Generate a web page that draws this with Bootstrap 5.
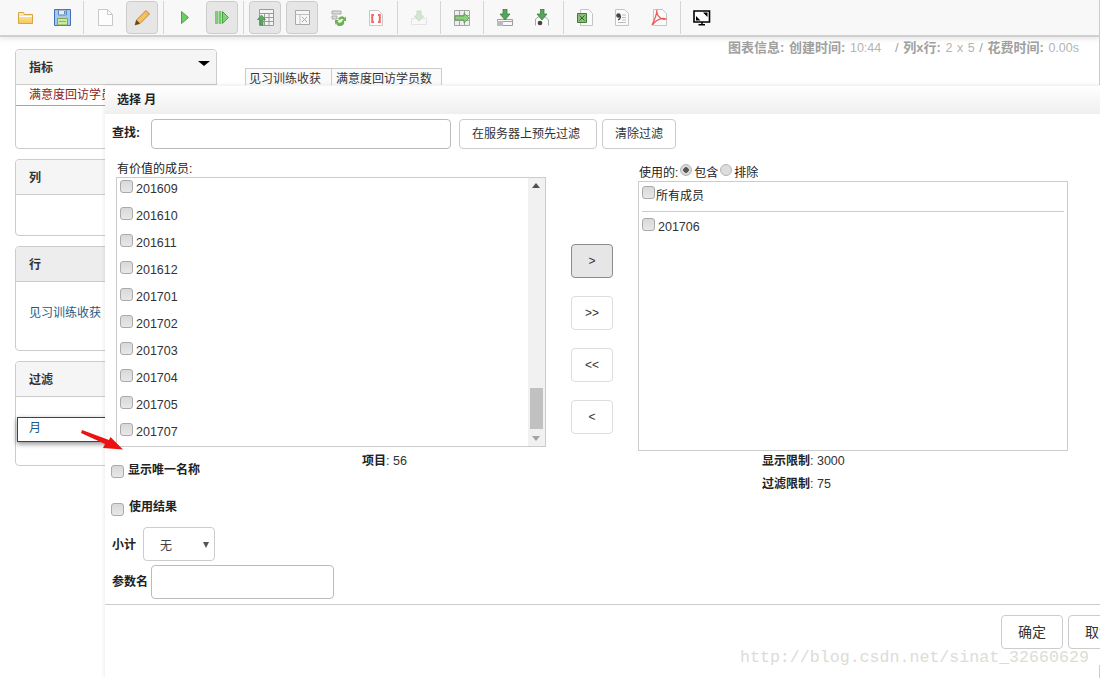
<!DOCTYPE html>
<html lang="zh">
<head>
<meta charset="utf-8">
<link rel="stylesheet" href="https://cdn.jsdelivr.net/npm/bootstrap@5.3.0/dist/css/bootstrap.min.css">
<style>
html,body{height:678px;overflow:hidden}
body{font:12px/1.4 "Liberation Sans","Noto Sans CJK SC",sans-serif;color:#333;background:#fff;position:relative;width:1100px}
.tb{height:37px;background:#f8f8f8;border-bottom:2px solid #d0d0d0;padding-left:9px;gap:5px;box-shadow:0 2px 5px rgba(0,0,0,.1);border-right:1px solid #ccc}
.tbtn{width:32px;height:33px;margin-top:1px;border-radius:4px;border:1px solid transparent}
.tbtn.on{background:#e6e6e6;border-color:#ccc}
.tsep{width:1px;height:33px;margin-top:1px;background:#d5d5d5}
.stage{height:641px;border-right:1px solid #ccc}
.side{width:202px;margin-left:15px;padding-top:12px;gap:10px}
.pnl{border:1px solid #ccc;border-radius:4px;background:#fff}
.pnl-h{height:35px;background:#f5f5f5;border-bottom:1px solid #ccc;font-weight:700;padding-left:13px;line-height:36px;color:#333;position:relative;border-radius:3px 3px 0 0}
.pnl-h.hov{background:#ededed}
.caret-dn{position:absolute;right:6px;top:11px;border:5px solid transparent;border-top-color:#000;border-bottom:0;border-left-width:6px;border-right-width:6px}
.p1{height:100px}.p2{height:77px}.p3,.p4{height:105px}
.m-red{color:#8b1a1a;padding-left:13px;height:21px;line-height:21px;border-bottom:1px solid #e08a8a}
.m-blue{color:#1d5a85;padding-left:13px}
.p3 .m-blue{margin-top:23px}
.m-blue.redbox{margin:20px 0 0 1px;padding-left:11px;height:25px;border:1px solid #d00;line-height:20px;box-shadow:0 2px 5px rgba(0,0,0,.45)}
.main{flex:1;position:relative}
.info{text-align:right;color:#a0a0a0;padding:2px 20px 0 0;height:31px;line-height:17px;font-size:13px;word-spacing:1px}
.info span{color:#b4b4b4;font-size:12.5px}
.pvt{margin:0 0 0 28px;border-collapse:collapse;line-height:16px}
.pvt td{border:1px solid #ccc;border-bottom:0;padding:2px 3px 0 3px;background:#fafafa;height:17px;color:#333;white-space:nowrap}
.pvt td.w1{width:86px}.pvt td.w2{width:110px;padding-left:4px}
.dlg{position:absolute;left:105px;top:85px;width:1020px;height:593px;background:#fff;box-shadow:-1px 0 4px rgba(0,0,0,.08)}
.dlg-h{height:29px;background:linear-gradient(#fff,#efefef);font-weight:700;line-height:29px;padding-left:12px;color:#222;border-top:1px solid #f3f3f3;font-size:12px}
.lbl{font-weight:700;color:#222}
.lbl-s{line-height:28px}
.srch{padding:5px 0 0 7px;height:35px}
.fld{border:1px solid #bbb;border-radius:4px;background:#fff;outline:0;padding:0}
.f1{width:300px;height:30px;margin:0 8px 0 11px}
.gbtn{background:#fff;border:1px solid #ccc;border-radius:4px;color:#333;font-size:12px;padding:1px 0 0;height:30px}
.gb1{width:138px;padding-right:4px}
.gb2{width:74px;margin-left:5px}
.cols{height:310px}
.lcol{width:430px;margin-left:11px}
.cap{height:13px;line-height:13px;margin-top:14px;padding-left:1px;color:#222;white-space:nowrap}
.lst{height:270px;width:430px;border:1px solid #ccc;position:relative;overflow:hidden;margin-top:1px}
.itm{height:27px;padding:2px 0 0 3px;gap:3px;align-items:flex-start;white-space:nowrap;color:#333;font-size:12.5px;line-height:16px}
.itm span{margin-top:1px}
.ck{appearance:none;-webkit-appearance:none;width:13px;height:13px;border:1px solid #aaa;border-radius:3px;background:linear-gradient(#d8d8d8,#e8e8e8);margin:0;flex:none;display:block}
.rd{appearance:none;-webkit-appearance:none;width:12px;height:12px;border:1px solid #b5b5b5;border-radius:50%;background:#ddd;margin:0 2px 0 2px;vertical-align:1px}
.rd:checked{background:radial-gradient(circle,#555 0 2.5px,#d8d8d8 3px)}
.sb{position:absolute;right:0;top:0;bottom:0;width:17px;background:#f1f1f1}
.sb b{position:absolute;left:2px;top:210px;width:13px;height:41px;background:#c1c1c1}
.sb i{position:absolute;left:4px;border:4px solid transparent}
.sb .u{top:5px;border-top:0;border-left-width:4px;border-bottom:5px solid #505050}
.sb .d{bottom:5px;border-bottom:0;border-top:5px solid #a3a3a3}
.mid{width:42px;margin:95px 25px 0 25px;gap:18px}
.mvb{width:42px;height:34px;background:#fff;border:1px solid #ddd;border-radius:4px;color:#333;font-size:12px;padding:0}
.mvb.act{background:#e6e6e6;border-color:#8c8c8c}
.rcol{width:430px}
.cap2{height:17px;margin-top:15px;padding-left:1px;line-height:17px;color:#222;white-space:nowrap}
.bx{width:430px;height:270px;border:1px solid #ccc;padding:4px 3px 0}
.allm{height:26px;border-bottom:1px solid #ccc;gap:1px;color:#222;line-height:17px}
.allm span{margin-top:2px}
.bx .itm{margin-top:4px;padding-left:0;gap:3px}
.bt{height:145px;position:relative}
.stats{position:absolute;top:-6px;color:#333;font-size:12.5px;line-height:17px}
.stats b{font-size:12px;color:#222}
.st1{left:257px}.st2{left:657px}
.stl{margin-top:6px}
.opt{padding-left:6px;gap:5px;font-weight:700;color:#222;line-height:12px}
.o1{padding-top:6px;height:20px;gap:4px}
.o1 span{margin-top:-1px}
.o2{margin-top:24px;height:14px}
.o2 span{margin-top:-2px}
.rw1{margin:10px 0 0 7px}
.rw1 .lbl{padding-top:2px}
.rw2{margin:4px 0 0 7px}
.sel{width:72px;height:34px;border:1px solid #ccc;border-radius:4px;margin-left:7px;position:relative;line-height:37px;padding-left:16px;color:#444}
.sel i{position:absolute;right:5px;top:14px;border:3.5px solid transparent;border-top:6px solid #555;border-bottom:0}
.f2{width:183px;height:34px;margin-left:3px}
.foot{border-top:1px solid #ccc;height:74px;padding:10px 0 0 896px;gap:5px}
.okb{width:62px;height:34px;flex:none;background:#fff;border:1px solid #ccc;border-radius:4px;font-size:14px;color:#333;padding:2px 0 0}
.wm{position:absolute;left:740px;top:648px;font:16.62px/20px "Liberation Mono",monospace;color:#dcdcd6;white-space:nowrap}
.arw{position:absolute;left:80px;top:430px;width:46px;height:24px;z-index:5}
.cnr{position:absolute;right:0;bottom:0;width:1px;height:13px;background:#ccc}
</style>
</head>
<body>
<div class="tb d-flex">
  <div class="tbtn d-flex align-items-center justify-content-center"><svg width="15" height="12" viewBox="0 0 15 12"><defs><linearGradient id="fg" x1="0" y1="0" x2="0" y2="1"><stop offset="0" stop-color="#fff0b4"/><stop offset="1" stop-color="#f5c85a"/></linearGradient></defs><path d="M.5.500h5l1 2h8v9H.5z" fill="url(#fg)" stroke="#d9a441"/><path d="M1.500 4.500h12" stroke="#fff" fill="none"/></svg></div>
  <div class="tbtn d-flex align-items-center justify-content-center"><svg width="17" height="17" viewBox="0 0 17 17"><path d="M.5.500h16v16H.5z" fill="#a9c6ee" stroke="#3f6fb5"/><path d="M4.500 1h8v5h-8z" fill="#e3ecf8" stroke="#5f86c2"/><path d="M10 2h1.500v3H10z" fill="#5f86c2"/><path d="M3.500 9.500h10v6.500h-10z" fill="#cfe6a8" stroke="#6fae4a"/><path d="M5 12.500h7" stroke="#7fbf58"/></svg></div>
  <div class="tsep"></div>
  <div class="tbtn d-flex align-items-center justify-content-center"><svg width="15" height="17" viewBox="0 0 15 17"><path d="M.5.500h9l5 5v11H.5z" fill="#fdfdfd" stroke="#c8c8c8"/><path d="M9.500.5v5h5" fill="none" stroke="#c8c8c8"/></svg></div>
  <div class="tbtn on d-flex align-items-center justify-content-center"><svg width="17" height="17" viewBox="0 0 17 17"><path d="M1 16l1.500-5L12 1.500l3.500 3.500L6 14.500z" fill="#f4c35e" stroke="#c5842a"/><path d="M1 16l1.500-5 3.500 3.500z" fill="#5a4632"/><path d="M11 3.500l2.500 2.500" stroke="#e9a07a"/></svg></div>
  <div class="tsep"></div>
  <div class="tbtn d-flex align-items-center justify-content-center"><svg width="8" height="13" viewBox="0 0 8 13"><path d="M.5.500L7.500 6.500.5 12.500z" fill="#6fcb64" stroke="#4aa544"/></svg></div>
  <div class="tbtn on d-flex align-items-center justify-content-center"><svg width="14" height="13" viewBox="0 0 14 13"><path d="M.5.500h2v12h-2zM4 .500h2v12H4z" fill="#7fd077" stroke="#5cb455" stroke-width=".6"/><path d="M7.500.500l6 6-6 6z" fill="#7fd077" stroke="#4aa544"/></svg></div>
  <div class="tsep"></div>
  <div class="tbtn on d-flex align-items-center justify-content-center"><svg width="17" height="17" viewBox="0 0 17 17"><path d="M2.500.5h14v16h-14zM2.500 4.500h14M7.500 4.500v12M12 4.500v12M2.500 8.500h14M2.500 12.500h14" fill="#f4f4f4" stroke="#9a9a9a"/><path d="M4.500 6L.5 10.500H3V16h3v-5.500h2.500z" fill="#5bac62" stroke="#3d7d45" stroke-width=".6"/></svg></div>
  <div class="tbtn on d-flex align-items-center justify-content-center"><svg width="15" height="15" viewBox="0 0 15 15"><path d="M.5.500h14v14H.5z" fill="#f6f6f6" stroke="#a8a8a8"/><path d="M.5 4.500h14M5 4.500V14.500" stroke="#c0c0c0" fill="none"/><path d="M7 7l5 5M12 7l-5 5" stroke="#aaa" fill="none"/></svg></div>
  <div class="tbtn d-flex align-items-center justify-content-center"><svg width="16" height="16" viewBox="0 0 16 16"><path d="M1 1h9v3H1zM1 6h5v3H1z" fill="#ddd" stroke="#aaa"/><path d="M7 9a4 4 0 0 1 7-1l1-2v5h-4l1.500-1.500A2.500 2.500 0 0 0 9 10z" fill="#6cb24e"/><path d="M13 11a4 4 0 0 1-8 2l-1 2v-5h4l-1.500 1.500A2.500 2.500 0 0 0 11 11z" fill="#6cb24e"/></svg></div>
  <div class="tbtn d-flex align-items-center justify-content-center"><svg width="14" height="16" viewBox="0 0 14 16"><path d="M.5.500h9l4 4v11H.5z" fill="#fdfdfd" stroke="#c8c8c8"/><path d="M5 5H3.200v7H5M9 5h1.800v7H9" fill="none" stroke="#f06a6a" stroke-width="2"/></svg></div>
  <div class="tsep"></div>
  <div class="tbtn d-flex align-items-center justify-content-center"><svg width="16" height="16" viewBox="0 0 16 16"><path d="M.5 8.500h15v6H.5z" fill="#f8f8f8" stroke="#e4e4e4"/><path d="M6 1h4v5h2.500L8 11 3.500 6H6z" fill="#d3e8d3" stroke="#c3dcc3"/></svg></div>
  <div class="tsep"></div>
  <div class="tbtn d-flex align-items-center justify-content-center"><svg width="16" height="16" viewBox="0 0 16 16"><path d="M.5.500h15v15H.5zM.5 5.500h15M.5 10.500h15M5.500 .5v15M10.500 .5v15" fill="#eee" stroke="#a5a5a5"/><path d="M1 6h9V3l5 5-5 5v-3H1z" fill="#8ccf7c" stroke="#4d8e3d" stroke-width=".7"/></svg></div>
  <div class="tsep"></div>
  <div class="tbtn d-flex align-items-center justify-content-center"><svg width="16" height="17" viewBox="0 0 16 17"><path d="M.5 10.500h15v2H.5zM.5 12.500h15v4H.5z" fill="#f8f8f8" stroke="#9d9d9d"/><path d="M0 12h6v5H0z" fill="#bbb"/><path d="M6 0h4v5h3L8 11 3 5h3z" fill="#5aa35a" stroke="#2f7a36" stroke-width=".7"/></svg></div>
  <div class="tbtn d-flex align-items-center justify-content-center"><svg width="14" height="17" viewBox="0 0 14 17"><path d="M.5 16.500V10l3-2h7l3 3v5.500" fill="#fafafa" stroke="#aaa"/><circle cx="5" cy="14" r="2.300" fill="#444"/><path d="M5.500 0h3.500v5h3L7 11 2 5h3.500z" fill="#5aa35a" stroke="#2f7a36" stroke-width=".7"/></svg></div>
  <div class="tsep"></div>
  <div class="tbtn d-flex align-items-center justify-content-center"><svg width="16" height="17" viewBox="0 0 16 17"><path d="M3.500.5h8l4 4v12h-12z" fill="#fbfbfb" stroke="#c4c4c4"/><path d="M.5 4.500h9v9h-9z" fill="#8dbd78" stroke="#3e7d33"/><path d="M2.500 6.500l5 5M7.500 6.500l-5 5" stroke="#2d6a25" fill="none"/></svg></div>
  <div class="tbtn d-flex align-items-center justify-content-center"><svg width="14" height="17" viewBox="0 0 14 17"><path d="M.5.500h9l4 4v12H.5z" fill="#fbfbfb" stroke="#c4c4c4"/><path d="M7 6h4M7 8.500h4M7 11h4M3 13.500h8" stroke="#bbb" fill="none"/><circle cx="3.500" cy="6.500" r="2.300" fill="#444"/><path d="M5.500 7c0 2-1 3.500-2.500 4" stroke="#444" fill="none" stroke-width="1.200"/></svg></div>
  <div class="tbtn d-flex align-items-center justify-content-center"><svg width="16" height="17" viewBox="0 0 16 17"><path d="M2.500.5h9l4 4v12h-13z" fill="#fbfbfb" stroke="#c4c4c4"/><path d="M6 1c-1 3 1 6 3.500 8 2 1.500 4 1.500 5.500 1-2-1-6-.5-9 1.500-2 1.300-4 3.500-5 4.500 2-4 4.500-9 5-15z" fill="none" stroke="#ec5a5a" stroke-width="1.300"/></svg></div>
  <div class="tsep"></div>
  <div class="tbtn d-flex align-items-center justify-content-center"><svg width="18" height="16" viewBox="0 0 18 16"><path d="M1 1h15.500v11H1z" fill="#fff" stroke="#000" stroke-width="1.600"/><path d="M5.500 14.800h6.500M9 12v3" stroke="#000" stroke-width="1.500"/><path d="M3 10.500V6l4.500 4.500zM14.500 2.500V7L10 2.500z" fill="#000"/></svg></div>
</div>
<div class="stage d-flex">
  <div class="side d-flex flex-column flex-none">
    <div class="pnl p1"><div class="pnl-h">指标<span class="caret-dn"></span></div><div class="m-red">满意度回访学员数</div></div>
    <div class="pnl p2"><div class="pnl-h">列</div></div>
    <div class="pnl p3"><div class="pnl-h hov">行</div><div class="m-blue">见习训练收获</div></div>
    <div class="pnl p4"><div class="pnl-h">过滤</div><div class="m-blue redbox">月</div></div>
  </div>
  <div class="main">
    <div class="info"><b>图表信息: 创建时间:</b> <span>10:44</span> &nbsp; / <b>列x行:</b> <span>2 x 5</span> / <b>花费时间:</b> <span>0.00s</span></div>
    <table class="pvt"><tr><td class="w1">见习训练收获</td><td class="w2">满意度回访学员数</td></tr></table>
  </div>
</div>
<div class="dlg d-flex flex-column">
  <div class="dlg-h">选择 月</div>
  <div class="srch d-flex align-items-start"><span class="lbl lbl-s">查找:</span><input class="fld f1" type="text" aria-label="查找"><button class="gbtn gb1">在服务器上预先过滤</button><button class="gbtn gb2">清除过滤</button></div>
  <div class="cols d-flex">
    <div class="lcol">
      <div class="cap">有价值的成员:</div>
      <div class="lst">
        <div class="itm d-flex"><input class="ck" type="checkbox"><span>201609</span></div>
        <div class="itm d-flex"><input class="ck" type="checkbox"><span>201610</span></div>
        <div class="itm d-flex"><input class="ck" type="checkbox"><span>201611</span></div>
        <div class="itm d-flex"><input class="ck" type="checkbox"><span>201612</span></div>
        <div class="itm d-flex"><input class="ck" type="checkbox"><span>201701</span></div>
        <div class="itm d-flex"><input class="ck" type="checkbox"><span>201702</span></div>
        <div class="itm d-flex"><input class="ck" type="checkbox"><span>201703</span></div>
        <div class="itm d-flex"><input class="ck" type="checkbox"><span>201704</span></div>
        <div class="itm d-flex"><input class="ck" type="checkbox"><span>201705</span></div>
        <div class="itm d-flex"><input class="ck" type="checkbox"><span>201707</span></div>
        <div class="sb"><i class="u"></i><b></b><i class="d"></i></div>
      </div>
    </div>
    <div class="mid d-flex flex-column"><button class="mvb act">&gt;</button><button class="mvb">&gt;&gt;</button><button class="mvb">&lt;&lt;</button><button class="mvb">&lt;</button></div>
    <div class="rcol">
      <div class="cap2">使用的:<input class="rd" type="radio" name="u" checked>包含<input class="rd" type="radio" name="u">排除</div>
      <div class="bx">
        <div class="allm d-flex"><input class="ck" type="checkbox"><span>所有成员</span></div>
        <div class="itm d-flex"><input class="ck" type="checkbox"><span>201706</span></div>
      </div>
    </div>
  </div>
  <div class="bt">
    <div class="stats st1"><b>项目</b>: 56</div>
    <div class="stats st2"><b>显示限制</b>: 3000<div class="stl"><b>过滤限制</b>: 75</div></div>
    <div class="opt o1 d-flex"><input class="ck" type="checkbox"><span>显示唯一名称</span></div>
    <div class="opt o2 d-flex"><input class="ck" type="checkbox"><span>使用结果</span></div>
    <div class="rw1 d-flex align-items-center"><span class="lbl">小计</span><div class="sel">无<i></i></div></div>
    <div class="rw2 d-flex align-items-center"><span class="lbl">参数名</span><input class="fld f2" type="text" aria-label="参数名"></div>
  </div>
  <div class="foot d-flex"><button class="okb">确定</button><button class="okb">取消</button></div>
</div>
<svg class="arw" viewBox="0 0 46 24"><path d="M2 0L29 10l1.500-3L43 19.500 23 18l2-4L1 3z" fill="#ee1111"/></svg>
<div class="wm">http://blog.csdn.net/sinat_32660629</div>
<div class="cnr"></div>
</body>
</html>
